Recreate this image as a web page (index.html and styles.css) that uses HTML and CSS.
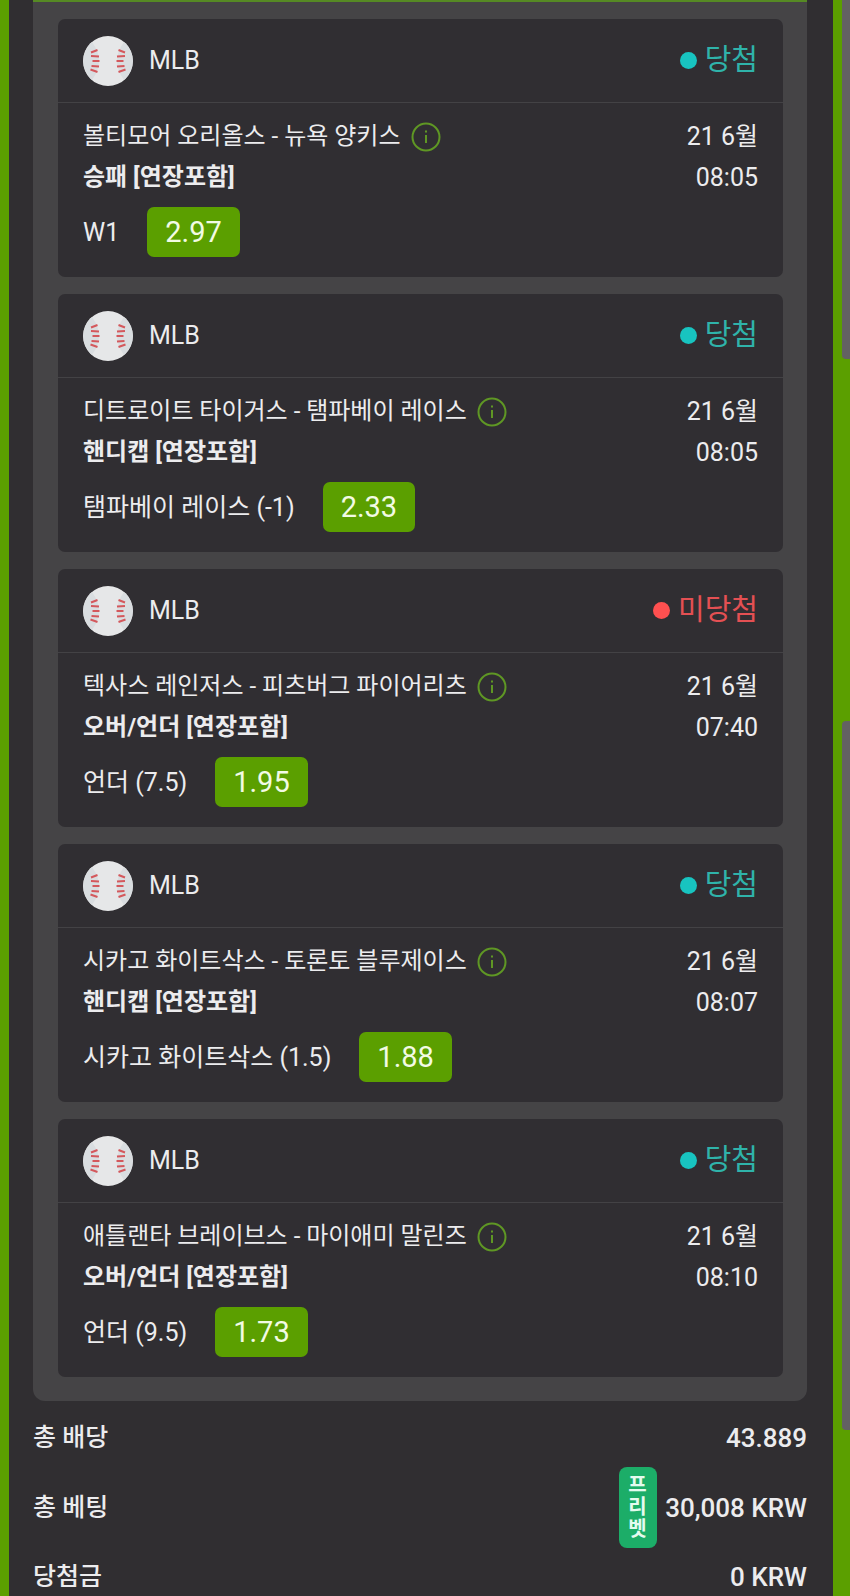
FILE: index.html
```html
<!DOCTYPE html>
<html lang="ko">
<head>
    <meta charset="UTF-8">
    <meta name="viewport" content="width=device-width, initial-scale=1.0">
    <title>MLB</title>

    <link rel="stylesheet" href="styles.css">
</head>
<body>

    <!-- Shared icons -->
    <svg class="icon-defs" aria-hidden="true">
        <symbol id="baseball" viewBox="0 0 50 50">
            <circle cx="25" cy="25" r="25" fill="#e6e7e8"/>
            <path d="M9 6Q23 25 9 44A25 25 0 0 1 9 6ZM41 6Q27 25 41 44A25 25 0 0 0 41 6Z" fill="#d9dde0"/>
            <g fill="none" stroke="#d4585c" stroke-width="2">
                <path d="M8 16.500l6.500-2.500M8 20l8 .5M9.500 25h7M8.500 30l7.500 .5M7.500 33.500l7 2.500"/>
                <path d="M42 16.500l-6.500-2.500M42 20l-8 .5M40.500 25h-7M41.500 30l-7.500 .5M42.500 33.500l-7 2.500"/>
            </g>
        </symbol>
        <symbol id="info" viewBox="0 0 30 30">
            <circle cx="15" cy="15" r="13.500" fill="none" stroke="#5f9724" stroke-width="2"/>
            <path d="M15 13v8M15 8.500v2" fill="none" stroke="#5f9724" stroke-width="2"/>
        </symbol>
    </svg>

    <main class="sheet">
        <section class="coupon">

            <article class="bet">
                <header class="bet-header">
                    <svg class="ball"><use href="#baseball"/></svg>
                    <span class="league">MLB</span>
                    <span class="status won">당첨</span>
                </header>
                <div class="bet-body">
                    <div class="details">
                        <div class="teams">볼티모어 오리올스 - 뉴욕 양키스
                            <button class="info" type="button" aria-label="info"><svg><use href="#info"/></svg></button>
                        </div>
                        <div class="market">승패 [연장포함]</div>
                        <div class="pick">W1 <span class="odds">2.97</span></div>
                    </div>
                    <div class="date">21 6월<br>08:05</div>
                </div>
            </article>

            <article class="bet">
                <header class="bet-header">
                    <svg class="ball"><use href="#baseball"/></svg>
                    <span class="league">MLB</span>
                    <span class="status won">당첨</span>
                </header>
                <div class="bet-body">
                    <div class="details">
                        <div class="teams">디트로이트 타이거스 - 탬파베이 레이스
                            <button class="info" type="button" aria-label="info"><svg><use href="#info"/></svg></button>
                        </div>
                        <div class="market">핸디캡 [연장포함]</div>
                        <div class="pick">탬파베이 레이스 (-1) <span class="odds">2.33</span></div>
                    </div>
                    <div class="date">21 6월<br>08:05</div>
                </div>
            </article>

            <article class="bet">
                <header class="bet-header">
                    <svg class="ball"><use href="#baseball"/></svg>
                    <span class="league">MLB</span>
                    <span class="status lost">미당첨</span>
                </header>
                <div class="bet-body">
                    <div class="details">
                        <div class="teams">텍사스 레인저스 - 피츠버그 파이어리츠
                            <button class="info" type="button" aria-label="info"><svg><use href="#info"/></svg></button>
                        </div>
                        <div class="market">오버/언더 [연장포함]</div>
                        <div class="pick">언더 (7.5) <span class="odds">1.95</span></div>
                    </div>
                    <div class="date">21 6월<br>07:40</div>
                </div>
            </article>

            <article class="bet">
                <header class="bet-header">
                    <svg class="ball"><use href="#baseball"/></svg>
                    <span class="league">MLB</span>
                    <span class="status won">당첨</span>
                </header>
                <div class="bet-body">
                    <div class="details">
                        <div class="teams">시카고 화이트삭스 - 토론토 블루제이스
                            <button class="info" type="button" aria-label="info"><svg><use href="#info"/></svg></button>
                        </div>
                        <div class="market">핸디캡 [연장포함]</div>
                        <div class="pick">시카고 화이트삭스 (1.5) <span class="odds">1.88</span></div>
                    </div>
                    <div class="date">21 6월<br>08:07</div>
                </div>
            </article>

            <article class="bet">
                <header class="bet-header">
                    <svg class="ball"><use href="#baseball"/></svg>
                    <span class="league">MLB</span>
                    <span class="status won">당첨</span>
                </header>
                <div class="bet-body">
                    <div class="details">
                        <div class="teams">애틀랜타 브레이브스 - 마이애미 말린즈
                            <button class="info" type="button" aria-label="info"><svg><use href="#info"/></svg></button>
                        </div>
                        <div class="market">오버/언더 [연장포함]</div>
                        <div class="pick">언더 (9.5) <span class="odds">1.73</span></div>
                    </div>
                    <div class="date">21 6월<br>08:10</div>
                </div>
            </article>

        </section>

        <!-- Coupon totals -->
        <dl class="totals">
            <div class="total">
                <dt>총 배당</dt>
                <dd>43.889</dd>
            </div>
            <div class="total">
                <dt>총 베팅</dt>
                <dd><span class="freebet">프리벳</span>30,008 KRW</dd>
            </div>
            <div class="total">
                <dt>당첨금</dt>
                <dd>0 KRW</dd>
            </div>
        </dl>
    </main>

    <!-- Scroll thumbs on the right edge -->
    <div class="rail">
        <div class="thumb thumb-top"></div>
        <div class="thumb thumb-bottom"></div>
    </div>

</body>
</html>
```
FILE: styles.css
```css
/* Basic reset */
* {
    margin: 0;
    padding: 0;
    box-sizing: border-box;
}

body {
    display: flex;
    min-height: 100vh;
    padding-left: 9px;
    background-color: #5b9f00;
    color: #ececee;
    font-family: Roboto, "Noto Sans CJK KR", sans-serif;
    font-size: 25px;
    line-height: 41px;
}

.icon-defs {
    display: none;
}

.sheet {
    flex: 1;
    padding: 0 26px 0 24px;
    background-color: #302e31;
}

.coupon {
    display: flex;
    flex-direction: column;
    gap: 17px;
    padding: 17px 24px 24px 25px;
    background-color: #454446;
    border-top: 2px solid #568a24;
    border-radius: 0 0 12px 12px;
}

.bet {
    background-color: #302e32;
    border-radius: 7px;
}

.bet-header {
    display: flex;
    align-items: center;
    gap: 16px;
    height: 84px;
    padding: 0 25px;
    border-bottom: 1px solid #434245;
}

.ball {
    width: 50px;
    height: 50px;
}

.status {
    display: flex;
    align-items: center;
    gap: 8px;
    margin-left: auto;
    font-size: 29px;
}

.status::before {
    content: "";
    width: 17px;
    height: 17px;
    border-radius: 50%;
}

.won {
    color: #2fb3aa;
}

.won::before {
    background-color: #18c4c0;
}

.lost {
    color: #e45053;
}

.lost::before {
    background-color: #ff5050;
}

.bet-body {
    display: flex;
    justify-content: space-between;
    padding: 13px 25px 20px;
}

.teams {
    display: flex;
    align-items: center;
    gap: 10px;
    font-size: 24px;
}

.info {
    display: flex;
    background: none;
    border: none;
    cursor: pointer;
}

.info svg {
    width: 30px;
    height: 30px;
}

.market {
    font-size: 24px;
    font-weight: 700;
}

.pick {
    display: flex;
    align-items: center;
    gap: 28px;
    margin-top: 9px;
}

.odds {
    padding: 0 18px;
    background-color: #5b9f00;
    border-radius: 7px;
    color: #f2fbe4;
    font-size: 29px;
    line-height: 50px;
}

.date {
    text-align: right;
}

/* Totals */
.totals {
    display: flex;
    flex-direction: column;
    gap: 10px;
    padding-top: 18px;
    font-weight: 500;
    line-height: 38px;
}

.total {
    display: flex;
    align-items: center;
    justify-content: space-between;
}

.total dd {
    display: flex;
    align-items: center;
    gap: 8px;
    font-size: 26px;
}

.freebet {
    width: 38px;
    padding: 7px 9px 8px;
    background-color: #1cad68;
    border-radius: 8px;
    color: #e4fbef;
    font-size: 20px;
    font-weight: 700;
    line-height: 22px;
    word-break: break-all;
}

/* Right rail */
.rail {
    display: flex;
    flex-direction: column;
    align-items: flex-end;
    width: 17px;
}

.thumb {
    width: 8px;
    background-color: #636163;
}

.thumb-top {
    height: 22.5%;
    margin-bottom: 362px;
    border-radius: 0 0 0 4px;
}

.thumb-bottom {
    height: 44.4%;
    border-radius: 4px 0 0 4px;
}
```
